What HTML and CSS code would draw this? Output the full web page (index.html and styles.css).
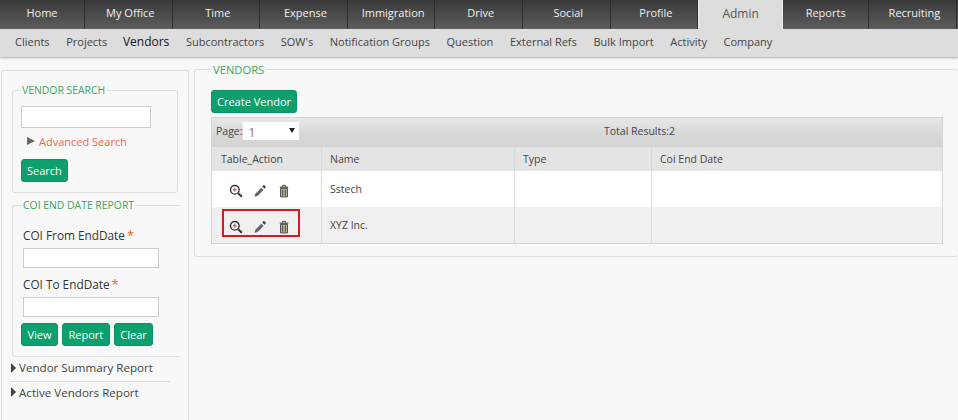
FILE: index.html
```html
<!DOCTYPE html>
<html lang="en">
<head>
  <meta charset="UTF-8">
  <title>Vendors</title>
  <link rel="stylesheet" href="styles.css">
</head>
<body>

  <!-- Top menu -->
  <div class="topnav">
    <a class="tab">Home</a>
    <a class="tab">My Office</a>
    <a class="tab">Time</a>
    <a class="tab">Expense</a>
    <a class="tab">Immigration</a>
    <a class="tab">Drive</a>
    <a class="tab">Social</a>
    <a class="tab">Profile</a>
    <a class="tab active">Admin</a>
    <a class="tab">Reports</a>
    <a class="tab">Recruiting</a>
  </div>
  <div class="subnav">
    <a>Clients</a>
    <a>Projects</a>
    <a class="current">Vendors</a>
    <a>Subcontractors</a>
    <a>SOW's</a>
    <a>Notification Groups</a>
    <a>Question</a>
    <a>External Refs</a>
    <a>Bulk Import</a>
    <a>Activity</a>
    <a>Company</a>
  </div>

  <div class="page">
    <!-- Left column -->
    <div class="sidebar">
      <fieldset class="box search-box">
        <legend>VENDOR SEARCH</legend>
        <input type="text" class="field">
        <div class="advanced"><span class="arrow grey"></span><a>Advanced Search</a></div>
        <button class="btn">Search</button>
      </fieldset>

      <fieldset class="box report-box">
        <legend>COI END DATE REPORT</legend>
        <label>COI From EndDate<span class="req">*</span></label>
        <input type="text" class="field">
        <label>COI To EndDate<span class="req">*</span></label>
        <input type="text" class="field">
        <div class="btn-row">
          <button class="btn">View</button>
          <button class="btn">Report</button>
          <button class="btn">Clear</button>
        </div>
      </fieldset>

      <div class="collapse first"><span class="arrow"></span>Vendor Summary Report</div>
      <div class="collapse"><span class="arrow"></span>Active Vendors Report</div>
    </div>

    <!-- Main column -->
    <fieldset class="box main-box">
      <legend>VENDORS</legend>
      <button class="btn create">Create Vendor</button>
      <div class="grid">
        <div class="pager">
          <div class="page-pick">
            <span>Page:</span>
            <div class="select"><span>1</span><i></i></div>
          </div>
          <div class="total">Total Results:2</div>
        </div>
        <table>
          <tr>
            <th class="col-action">Table_Action</th>
            <th class="col-name">Name</th>
            <th class="col-type">Type</th>
            <th>Coi End Date</th>
          </tr>
          <tr>
            <td>
              <div class="actions">
                <svg viewBox="0 0 14 14"><use href="#zoom"/></svg>
                <svg viewBox="0 0 14 14"><use href="#pencil"/></svg>
                <svg viewBox="0 0 14 14"><use href="#trash"/></svg>
              </div>
            </td>
            <td>Sstech</td>
            <td></td>
            <td></td>
          </tr>
          <tr class="alt">
            <td>
              <div class="actions">
                <div class="marker"></div>
                <svg viewBox="0 0 14 14"><use href="#zoom"/></svg>
                <svg viewBox="0 0 14 14"><use href="#pencil"/></svg>
                <svg viewBox="0 0 14 14"><use href="#trash"/></svg>
              </div>
            </td>
            <td>XYZ Inc.</td>
            <td></td>
            <td></td>
          </tr>
        </table>
      </div>
    </fieldset>
  </div>

  <svg class="defs" width="0" height="0">
    <symbol id="zoom" viewBox="0 0 14 14">
      <circle cx="5.800" cy="5.800" r="4.300" fill="none" stroke="#333" stroke-width="1.400"/>
      <path d="M3.800 5.800h4M5.800 3.800v4" stroke="#b0564a" stroke-width="1"/>
      <path d="M9.200 9.200l3.600 3.600" stroke="#333" stroke-width="2"/>
    </symbol>
    <symbol id="pencil" viewBox="0 0 14 14">
      <path d="M1.500 12.800l.8-3 6-6 2.200 2.200-6 6z" fill="#5f6670"/>
      <path d="M9.200 2.500l1.200-1.200a.8.8 0 0 1 1.100 0l1.100 1.100a.8.8 0 0 1 0 1.100l-1.200 1.200z" fill="#444"/>
    </symbol>
    <symbol id="trash" viewBox="0 0 14 14">
      <path d="M5.400 2.600v-1.200h3.200v1.200" fill="none" stroke="#444" stroke-width="1"/>
      <path d="M2.800 2.600h8.400v1.200h-8.400z" fill="#444"/>
      <path d="M3.600 4.300h6.800v8.600h-6.800z" fill="#c9c39a" stroke="#444" stroke-width="1"/>
      <path d="M5.700 5.400v6.400M8.300 5.400v6.400" stroke="#445" stroke-width="1.100"/>
    </symbol>
  </svg>

</body>
</html>
```

FILE: styles.css
```css
html, body {
  height: 100%;
}

body {
  margin: 0;
  background: #f8f8f8;
  font-family: "Open Sans", sans-serif;
  font-size: 11px;
  color: #444;
  overflow: hidden;
}

/* top menu */
.topnav {
  display: flex;
  height: 29px;
  background: linear-gradient(#3a3a3a, #5c5c5c);
}

.tab {
  box-sizing: border-box;
  width: 87.600px;
  height: 29px;
  padding-left: 4px;
  line-height: 26px;
  text-align: center;
  color: #f0f0f0;
  border-right: 1px solid #2e2e2e;
}

.tab:first-child {
  width: 85px;
  padding-left: 0;
}

.tab.active {
  width: 85px;
  padding-left: 0;
  background: #ddd;
  color: #555;
  font-size: 12px;
  line-height: 27px;
  border-right: 1px solid #eee;
  border-left: 1px solid #eee;
}

.active + .tab {
  width: 86px;
  padding-left: 0;
}

.subnav {
  display: flex;
  gap: 16.600px;
  height: 28px;
  padding-left: 15px;
  background: #ddd;
  box-shadow: 0 1px 2px #aaa;
  line-height: 26px;
  color: #444;
}

.subnav .current {
  margin-left: -1px;
  color: #111;
  font-size: 12px;
  font-weight: 500;
}

/* columns */
.page {
  display: flex;
  align-items: flex-start;
  gap: 5px;
  padding: 13px 0 0 1px;
}

.sidebar {
  box-sizing: border-box;
  width: 188px;
  height: 360px;
  flex: none;
  padding: 13px 0 0 10px;
  border: 1px solid #ddd;
  border-bottom: 0;
  border-radius: 3px 3px 0 0;
}

/* boxes with green title */
.box {
  margin: 0;
  padding: 0;
  background: transparent;
  border: 1px solid #ddd;
  border-radius: 3px;
  min-width: 0;
}

.box legend {
  margin-left: 0;
  padding: 0 2px 0 1px;
  color: #3fa45f;
  font-size: 10.400px;
  font-weight: 500;
  line-height: 13px;
}

.search-box {
  box-sizing: border-box;
  width: 166px;
  height: 109px;
  padding: 9px 0 0 8px;
}

.field {
  display: block;
  box-sizing: border-box;
  width: 130px;
  height: 22px;
  margin: 0;
  padding: 0;
  background: #fff;
  border: 1px solid #ccc;
  border-radius: 0;
}

.advanced {
  display: flex;
  align-items: center;
  height: 24px;
  margin: 1px 0 6px 6px;
  color: #f0654f;
}

.arrow {
  display: inline-block;
  width: 0;
  height: 0;
  margin-left: 1px;
  margin-right: 3px;
  border-left: 5px solid #444;
  border-top: 5px solid transparent;
  border-bottom: 5px solid transparent;
}

.arrow.grey {
  margin-left: 0;
  margin-right: 4px;
  border-left: 8px solid #666;
  border-top: 4.500px solid transparent;
  border-bottom: 4.500px solid transparent;
}

.btn {
  display: block;
  height: 23px;
  padding: 0 5px;
  background: #0d9f6e;
  border: 1px solid #0b9468;
  border-radius: 3px;
  color: #fff;
  font-family: "Open Sans", sans-serif;
  font-size: 11px;
}

.report-box {
  box-sizing: border-box;
  width: 168px;
  height: 158px;
  margin-top: 6px;
  padding: 14px 0 0 10px;
  border-right: 0;
  border-radius: 3px 0 0 3px;
}

.report-box legend {
  margin-left: -1px;
}

.report-box label {
  display: block;
  height: 22px;
  color: #333;
  font-size: 11.800px;
  line-height: 18px;
}

.report-box .field {
  width: 136px;
  height: 20px;
  margin-bottom: 7px;
}

.report-box label + .field + label + .field {
  margin-bottom: 9px;
}

.req {
  margin-left: 2px;
  color: #e8622c;
  font-size: 13px;
}

.btn-row {
  display: flex;
  gap: 4px;
  margin: -3px 0 0 -2px;
}

.btn-row .btn {
  padding: 0 5.500px;
}

.collapse {
  box-sizing: border-box;
  display: flex;
  align-items: center;
  height: 22px;
  margin-left: -2px;
  padding-bottom: 2px;
  color: #444;
  font-size: 11.600px;
}

.collapse.first {
  width: 160px;
  height: 25px;
  padding-bottom: 3px;
  border-bottom: 1px solid #ddd;
}

/* main area */
.main-box {
  box-sizing: border-box;
  flex: 1;
  height: 194px;
  margin-top: -7px;
  padding: 14px 0 0 16px;
  border-right: 0;
}

.main-box legend {
  margin-left: 1px;
  font-size: 11.200px;
}

.grid {
  box-sizing: border-box;
  width: 732px;
  margin-top: 4px;
  border: 1px solid #d4d4d4;
}

.pager {
  box-sizing: border-box;
  display: flex;
  align-items: center;
  height: 29px;
  padding: 0 0 3px 4px;
  background: linear-gradient(#e8e8e8, #d8d8d8 55%, #d4d4d4);
  color: #444;
  font-size: 10.500px;
}

.page-pick {
  display: flex;
  align-items: center;
  width: 328px;
}

.select {
  position: relative;
  box-sizing: border-box;
  width: 56px;
  height: 18px;
  padding-left: 6px;
  background: #fff;
  color: #a5703a;
  font-size: 12px;
  line-height: 21px;
}

.select i {
  position: absolute;
  right: 4px;
  top: 6px;
  border-top: 5px solid #222;
  border-left: 3px solid transparent;
  border-right: 3px solid transparent;
}

.total {
  padding-left: 60px;
}

table {
  width: 100%;
  border-collapse: collapse;
  table-layout: fixed;
  font-size: 10.500px;
}

th {
  height: 24px;
  padding: 0 0 0 8px;
  background: #e4e4e4;
  text-align: left;
  font-weight: 400;
  color: #444;
  border-right: 1px solid #d8d8d8;
}

td {
  height: 36px;
  padding: 0 0 0 8px;
  background: #fff;
  border-right: 1px solid #ddd;
  color: #444;
}

tr.alt td {
  background: #f0f0f0;
}

th:last-child, td:last-child {
  border-right: 0;
}

th.col-action {
  width: 100px;
  padding-left: 9px;
}

.col-name { width: 184px; }
.col-type { width: 128px; }

.actions {
  position: relative;
  display: flex;
  gap: 10px;
  padding-left: 9px;
}

.actions svg {
  width: 14px;
  height: 14px;
  margin-top: 4px;
}

/* red highlight drawn over the row */
.marker {
  position: absolute;
  left: 2px;
  top: -7px;
  width: 78px;
  height: 28px;
  box-sizing: border-box;
  border: 2px solid #e4141e;
}

.defs {
  position: absolute;
}
```
